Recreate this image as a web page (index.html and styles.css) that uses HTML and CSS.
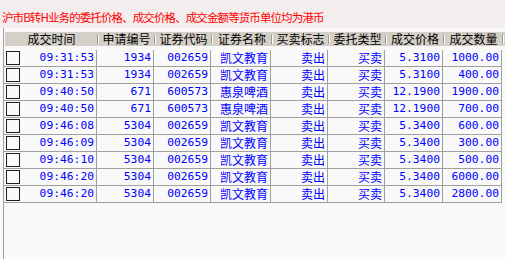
FILE: index.html
```html
<!DOCTYPE html>
<html>
<head>
<meta charset="utf-8">
<link rel="stylesheet" href="styles.css">
</head>
<body>
<div class="notice">沪市B转H业务的委托价格、成交价格、成交金额等货币单位均为港币</div>
<div class="panel">
  <div class="head">
    <div class="hc">成交时间</div>
    <div class="hc">申请编号</div>
    <div class="hc">证券代码</div>
    <div class="hc">证券名称</div>
    <div class="hc">买卖标志</div>
    <div class="hc">委托类型</div>
    <div class="hc">成交价格</div>
    <div class="hc">成交数量</div>
  </div>
  <div class="rows">
    <div class="row"><div class="c first"><span class="box"></span><span class="num">09:31:53</span></div><div class="c num">1934</div><div class="c num">002659</div><div class="c cn">凯文教育</div><div class="c cn">卖出</div><div class="c cn">买卖</div><div class="c num">5.3100</div><div class="c num">1000.00</div></div>
    <div class="row"><div class="c first"><span class="box"></span><span class="num">09:31:53</span></div><div class="c num">1934</div><div class="c num">002659</div><div class="c cn">凯文教育</div><div class="c cn">卖出</div><div class="c cn">买卖</div><div class="c num">5.3100</div><div class="c num">400.00</div></div>
    <div class="row"><div class="c first"><span class="box"></span><span class="num">09:40:50</span></div><div class="c num">671</div><div class="c num">600573</div><div class="c cn">惠泉啤酒</div><div class="c cn">卖出</div><div class="c cn">买卖</div><div class="c num">12.1900</div><div class="c num">1900.00</div></div>
    <div class="row"><div class="c first"><span class="box"></span><span class="num">09:40:50</span></div><div class="c num">671</div><div class="c num">600573</div><div class="c cn">惠泉啤酒</div><div class="c cn">卖出</div><div class="c cn">买卖</div><div class="c num">12.1900</div><div class="c num">700.00</div></div>
    <div class="row"><div class="c first"><span class="box"></span><span class="num">09:46:08</span></div><div class="c num">5304</div><div class="c num">002659</div><div class="c cn">凯文教育</div><div class="c cn">卖出</div><div class="c cn">买卖</div><div class="c num">5.3400</div><div class="c num">600.00</div></div>
    <div class="row"><div class="c first"><span class="box"></span><span class="num">09:46:09</span></div><div class="c num">5304</div><div class="c num">002659</div><div class="c cn">凯文教育</div><div class="c cn">卖出</div><div class="c cn">买卖</div><div class="c num">5.3400</div><div class="c num">300.00</div></div>
    <div class="row"><div class="c first"><span class="box"></span><span class="num">09:46:10</span></div><div class="c num">5304</div><div class="c num">002659</div><div class="c cn">凯文教育</div><div class="c cn">卖出</div><div class="c cn">买卖</div><div class="c num">5.3400</div><div class="c num">500.00</div></div>
    <div class="row"><div class="c first"><span class="box"></span><span class="num">09:46:20</span></div><div class="c num">5304</div><div class="c num">002659</div><div class="c cn">凯文教育</div><div class="c cn">卖出</div><div class="c cn">买卖</div><div class="c num">5.3400</div><div class="c num">6000.00</div></div>
    <div class="row"><div class="c first"><span class="box"></span><span class="num">09:46:20</span></div><div class="c num">5304</div><div class="c num">002659</div><div class="c cn">凯文教育</div><div class="c cn">卖出</div><div class="c cn">买卖</div><div class="c num">5.3400</div><div class="c num">2800.00</div></div>
  </div>
</div>
</body>
</html>
```
FILE: styles.css
```css
html, body {
  margin: 0;
  padding: 0;
  background: #f9f9f9;
  height: 100%;
  overflow: hidden;
}
body {
  font-family: "Noto Sans CJK SC", "Noto Sans", sans-serif;
  font-size: 12px;
}
.notice {
  height: 28px;
  box-sizing: border-box;
  background: #f4eded;
  color: #ff0000;
  padding: 9px 0 0 2px;
  line-height: 16px;
  font-size: 11.5px;
  letter-spacing: -0.9px;
  white-space: nowrap;
}
.panel {
  margin-left: 3px;
  border-left: 1px solid #a0a0a0;
  height: 231px;
  padding-top: 4px;
  box-sizing: border-box;
}
.head {
  display: grid;
  grid-template-columns: 93px 57px 57px 60px 57px 57px 58px 59px 1fr;
  height: 14px;
  background: #d4d0c8;
  margin-left: 1px;
}
.hc {
  position: relative;
  text-align: center;
  line-height: 14px;
  color: #000;
  font-size: 12px;
  white-space: nowrap;
}
.hc::after {
  content: "";
  position: absolute;
  right: 0;
  top: 3px;
  bottom: 2px;
  width: 1px;
  background: #9a9890;
  box-shadow: 1px 0 0 #ffffff;
}
.rows {
  margin-top: 4px;
  width: 498px;
}
.row {
  display: grid;
  grid-template-columns: 93px 57px 57px 60px 57px 57px 58px 59px;
  height: 17px;
  border-bottom: 1px solid #a0a0a0;
  box-sizing: border-box;
}
.c {
  border-right: 1px solid #a0a0a0;
  color: #0000ff;
  text-align: right;
  padding-right: 2px;
  line-height: 16px;
  white-space: nowrap;
  overflow: hidden;
}
.first {
  display: flex;
  justify-content: space-between;
  align-items: center;
  padding-left: 2px;
}
.num {
  font-family: "DejaVu Sans Mono", "Liberation Mono", monospace;
  font-size: 11.3px;
}
.cn {
  font-size: 12px;
}
.box {
  width: 12px;
  height: 12px;
  border: 1px solid #202020;
  background: transparent;
  flex: none;
}
```
